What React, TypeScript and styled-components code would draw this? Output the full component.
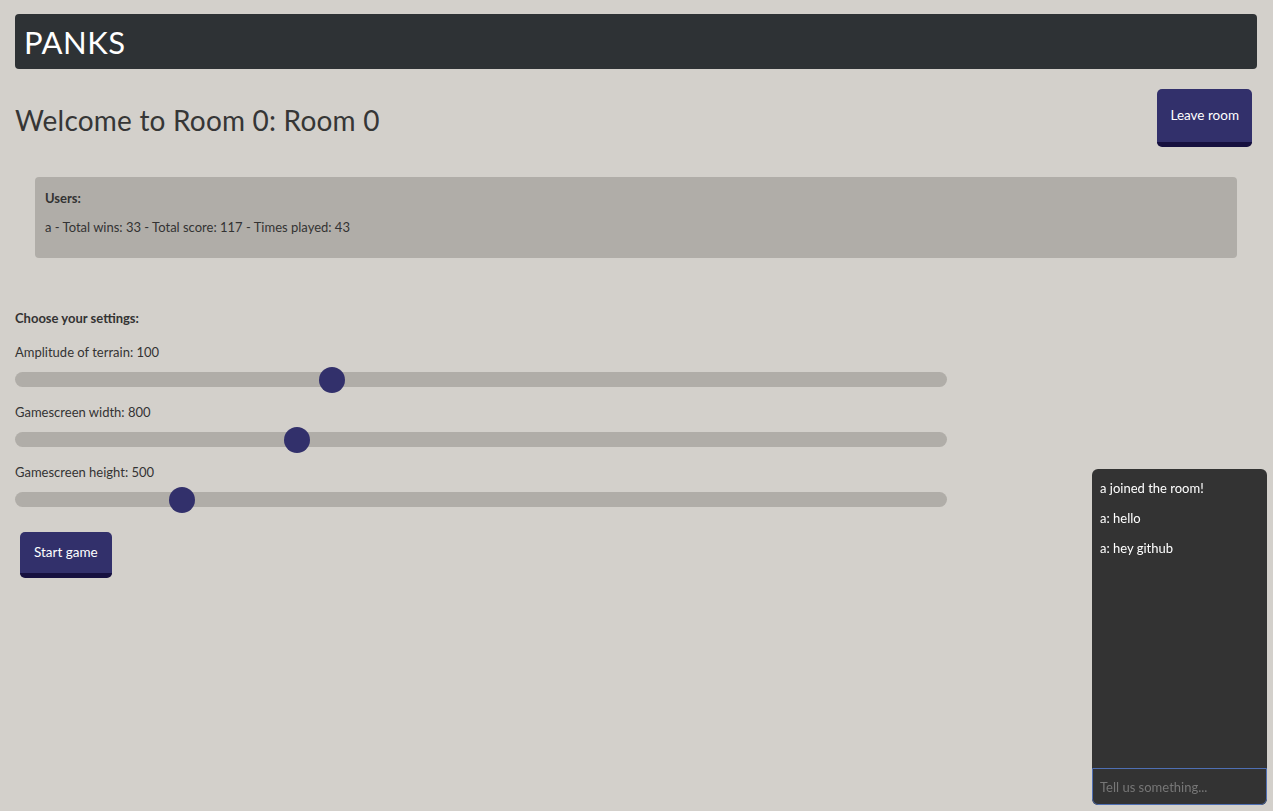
import React from "react";
import styled, { createGlobalStyle } from "styled-components";

const Global = createGlobalStyle`
  html, body { margin: 0; padding: 0; }
  body {
    background: #d3d0cb;
    font-family: Lato, "Noto Sans", sans-serif;
    color: #333;
  }
`;

const Page = styled.div`
  padding: 14px 16px 0 15px;
  display: flex;
  flex-direction: column;
`;

const Header = styled.header`
  background: #2e3235;
  border-radius: 4px;
  height: 55px;
  display: flex;
  align-items: center;
  padding-left: 9px;
`;

const Logo = styled.h1`
  margin: 0;
  color: #fff;
  font-size: 31px;
  font-weight: 400;
  letter-spacing: 0.5px;
`;

const TitleRow = styled.div`
  display: flex;
  justify-content: space-between;
  align-items: center;
  margin-top: 20px;
  padding-right: 5px;
`;

const Title = styled.h2`
  margin: 0;
  padding-top: 3px;
  font-size: 28px;
  font-weight: 400;
  letter-spacing: 0.2px;
  color: #363636;
`;

const Button = styled.button<{ $h: number }>`
  background: #32306b;
  color: #fff;
  border: none;
  border-bottom: 5px solid #16103f;
  border-radius: 5px;
  font-family: inherit;
  font-size: 13.5px;
  padding: 0 ${(p) => (p.$h > 50 ? 13 : 14)}px 1px;
  height: ${(p) => p.$h}px;
  cursor: pointer;
`;

const UsersPanel = styled.section`
  margin: 30px 20px 0 20px;
  background: #b0ada8;
  border-radius: 4px;
  padding: 13px 10px 23px;
  font-size: 13px;
`;

const PanelTitle = styled.div`
  font-weight: 700;
  margin-bottom: 13px;
`;

const Settings = styled.section`
  margin-top: 52px;
  width: 932px;
  display: flex;
  flex-direction: column;
  font-size: 13px;
`;

const SettingsTitle = styled.div`
  font-weight: 700;
  margin-bottom: 18px;
`;

const Label = styled.div`
  margin-bottom: 12px;
`;

const Range = styled.input`
  -webkit-appearance: none;
  appearance: none;
  width: 100%;
  height: 15px;
  border-radius: 8px;
  background: #b0ada8;
  margin: 0 0 17px 0;
  outline: none;
  &::-webkit-slider-thumb {
    -webkit-appearance: none;
    width: 26px;
    height: 26px;
    border-radius: 50%;
    background: #32306b;
    border: none;
  }
`;

const StartWrap = styled.div`
  padding-left: 5px;
  margin-top: 8px;
`;

const Chat = styled.aside`
  position: fixed;
  right: 6px;
  bottom: 6px;
  width: 175px;
  height: 336px;
  background: #333;
  border-radius: 6px;
  display: flex;
  flex-direction: column;
  overflow: hidden;
`;

const Messages = styled.div`
  flex: 1;
  padding: 11px 8px;
  display: flex;
  flex-direction: column;
  gap: 14px;
  color: #fff;
  font-size: 13px;
`;

const ChatInput = styled.input`
  height: 37px;
  box-sizing: border-box;
  background: #333;
  border: 1.5px solid #4f6fb3;
  border-radius: 0 0 6px 6px;
  color: #fff;
  font-family: inherit;
  font-size: 13px;
  padding: 0 7px;
  outline: none;
  &::placeholder { color: #777; }
`;

const sliders = [
  { label: "Amplitude of terrain: 100", frac: 0.3355 },
  { label: "Gamescreen width: 800", frac: 0.297 },
  { label: "Gamescreen height: 500", frac: 0.17 },
];

export default function App() {
  return (
    <>
      <Global />
      <Page>
        <Header>
          <Logo>PANKS</Logo>
        </Header>
        <TitleRow>
          <Title>Welcome to Room 0: Room 0</Title>
          <Button $h={58}>Leave room</Button>
        </TitleRow>
        <UsersPanel>
          <PanelTitle>Users:</PanelTitle>
          <div>a - Total wins: 33 - Total score: 117 - Times played: 43</div>
        </UsersPanel>
        <Settings>
          <SettingsTitle>Choose your settings:</SettingsTitle>
          {sliders.map((s) => (
            <React.Fragment key={s.label}>
              <Label>{s.label}</Label>
              <Range type="range" min={0} max={1000} defaultValue={Math.round(s.frac * 1000)} />
            </React.Fragment>
          ))}
          <StartWrap>
            <Button $h={46}>Start game</Button>
          </StartWrap>
        </Settings>
      </Page>
      <Chat>
        <Messages>
          <div>a joined the room!</div>
          <div>a: hello</div>
          <div>a: hey github</div>
        </Messages>
        <ChatInput placeholder="Tell us something..." />
      </Chat>
    </>
  );
}
